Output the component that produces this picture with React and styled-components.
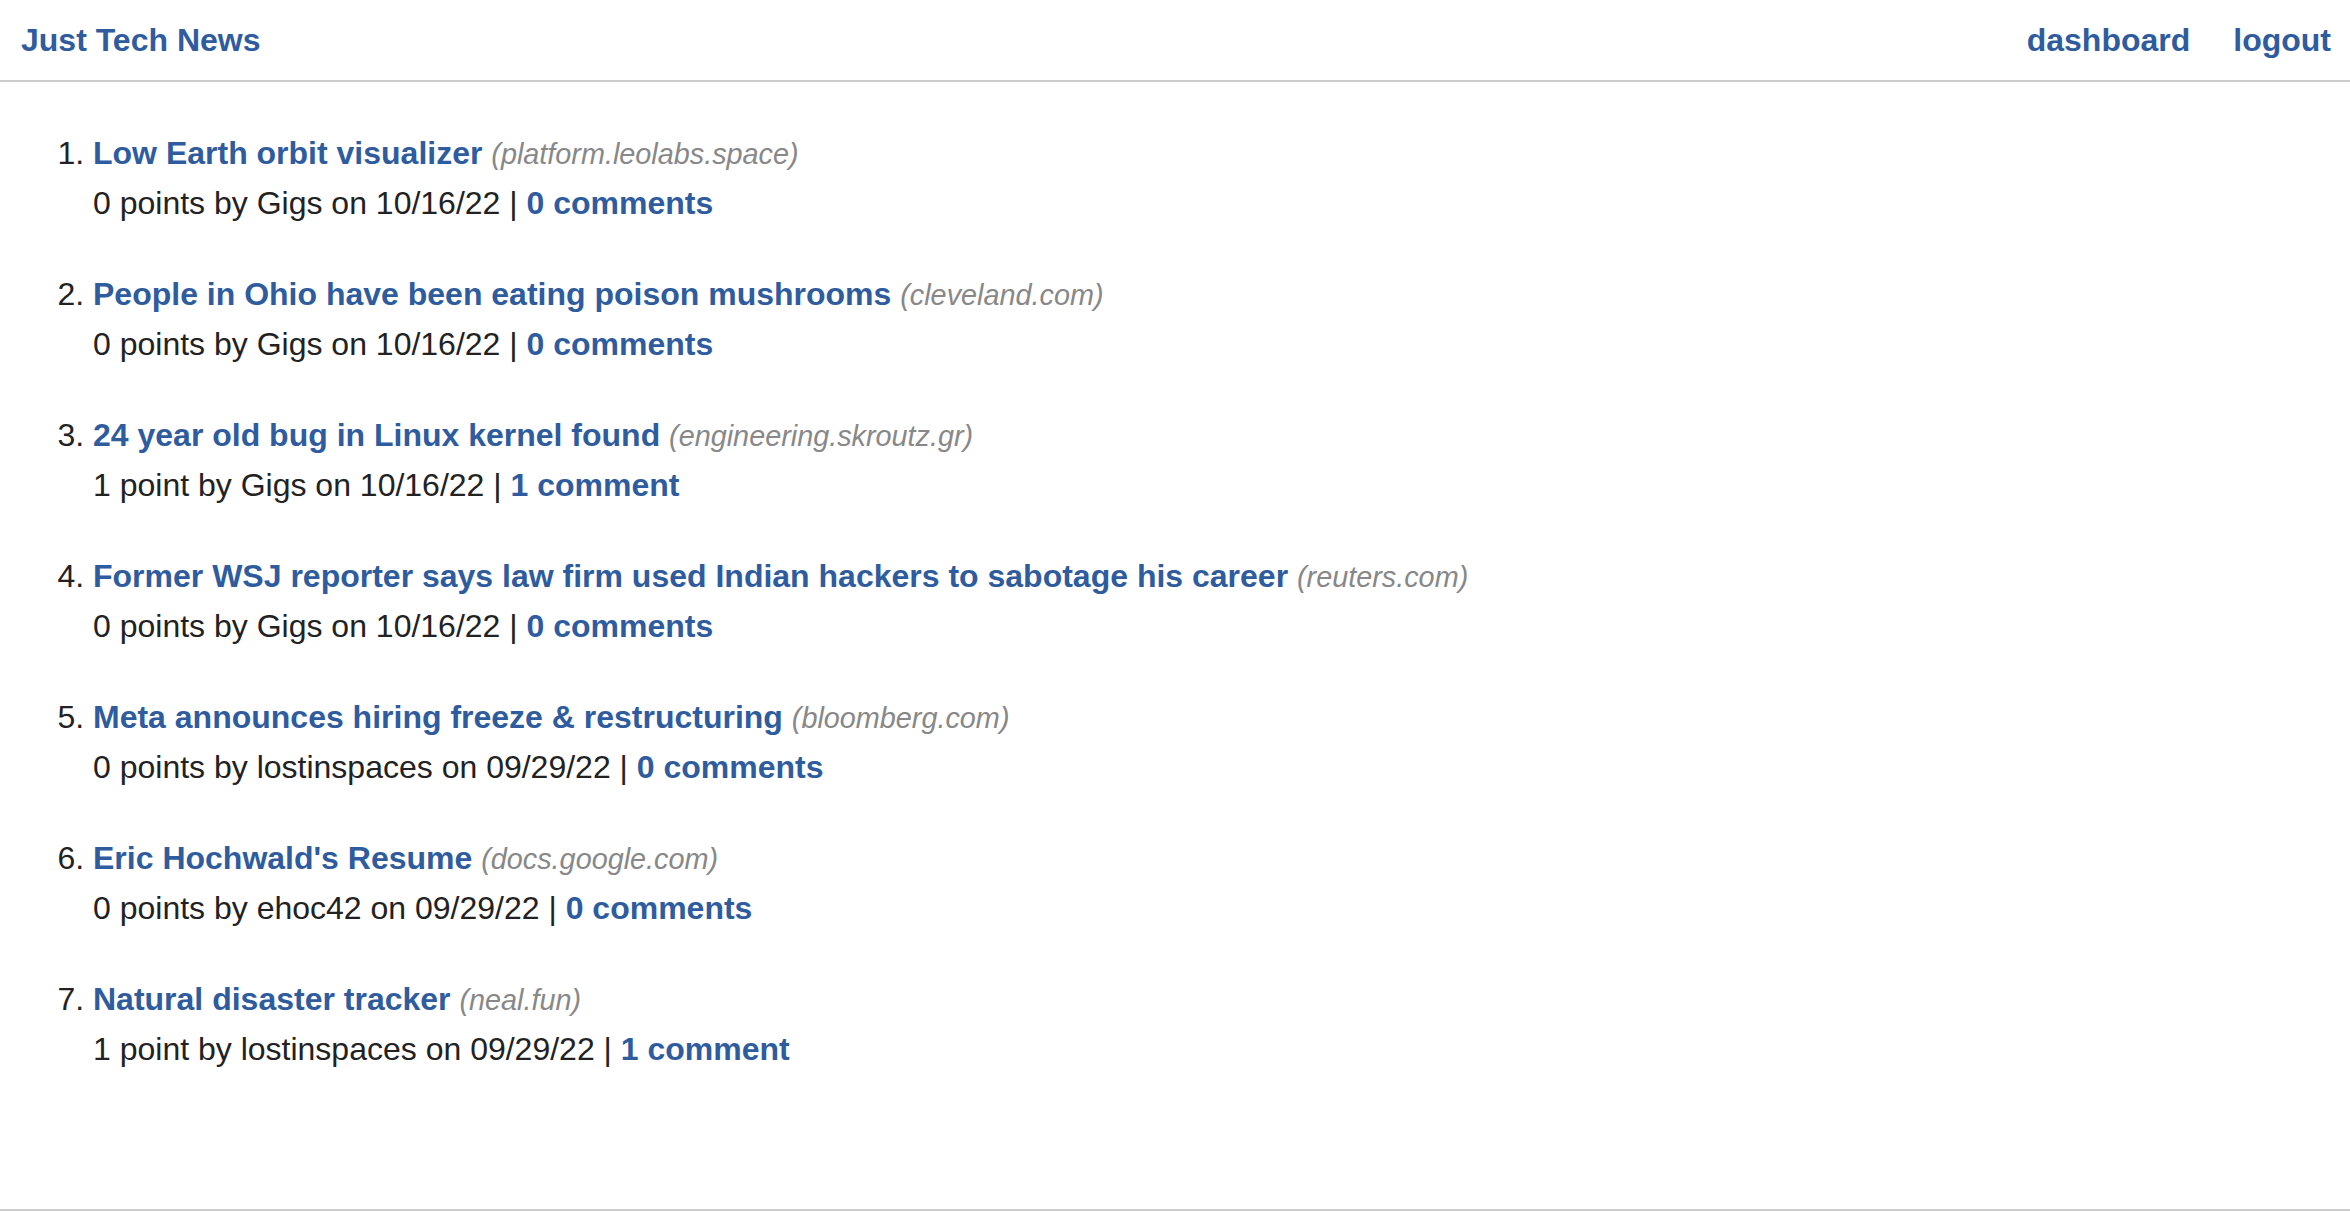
import React from "react";
import styled, { createGlobalStyle } from "styled-components";

const GlobalStyle = createGlobalStyle`
  body {
    margin: 0;
    background: #fff;
    font-family: "Liberation Sans", Arial, Helvetica, sans-serif;
    color: #222;
  }
  a {
    text-decoration: none;
  }
`;

const posts = [
  { title: "Low Earth orbit visualizer", domain: "platform.leolabs.space", points: 0, user: "Gigs", date: "10/16/22", comments: 0 },
  { title: "People in Ohio have been eating poison mushrooms", domain: "cleveland.com", points: 0, user: "Gigs", date: "10/16/22", comments: 0 },
  { title: "24 year old bug in Linux kernel found", domain: "engineering.skroutz.gr", points: 1, user: "Gigs", date: "10/16/22", comments: 1 },
  { title: "Former WSJ reporter says law firm used Indian hackers to sabotage his career", domain: "reuters.com", points: 0, user: "Gigs", date: "10/16/22", comments: 0 },
  { title: "Meta announces hiring freeze & restructuring", domain: "bloomberg.com", points: 0, user: "lostinspaces", date: "09/29/22", comments: 0 },
  { title: "Eric Hochwald's Resume", domain: "docs.google.com", points: 0, user: "ehoc42", date: "09/29/22", comments: 0 },
  { title: "Natural disaster tracker", domain: "neal.fun", points: 1, user: "lostinspaces", date: "09/29/22", comments: 1 },
];

const plural = (n, word) => `${n} ${word}${n === 1 ? "" : "s"}`;

const App = () => {
  return (
    <>
      <GlobalStyle />
      <Header>
        <Brand href="#">Just Tech News</Brand>
        <Nav>
          <NavLink href="#">dashboard</NavLink>
          <NavLink href="#">logout</NavLink>
        </Nav>
      </Header>
      <Main>
        <PostList>
          {posts.map((post) => (
            <Post key={post.title}>
              <TitleLine>
                <PostTitle href="#">{post.title}</PostTitle>{" "}
                <Domain>({post.domain})</Domain>
              </TitleLine>
              <Meta>
                {plural(post.points, "point")} by {post.user} on {post.date} |{" "}
                <CommentLink href="#">{plural(post.comments, "comment")}</CommentLink>
              </Meta>
            </Post>
          ))}
        </PostList>
      </Main>
      <Footer />
    </>
  );
};

const Header = styled.header`
  display: flex;
  justify-content: space-between;
  align-items: center;
  height: 80px;
  padding: 0 19px 0 21px;
  border-bottom: 2px solid #cccccc;
`;

const Brand = styled.a`
  color: #2f5c9e;
  font-size: 32px;
  font-weight: bold;
`;

const Nav = styled.nav`
  display: flex;
  gap: 43px;
`;

const NavLink = styled.a`
  color: #2f5c9e;
  font-size: 32px;
  font-weight: bold;
`;

const Main = styled.main`
  min-height: 1127px;
  box-sizing: border-box;
  padding-top: 47px;
`;

const PostList = styled.ol`
  margin: 0;
  padding-left: 93px;
  font-size: 32px;
`;

const Post = styled.li`
  margin-bottom: 43px;
  &::marker {
    color: #222;
  }
`;

const TitleLine = styled.div`
  line-height: 48px;
`;

const PostTitle = styled.a`
  color: #2f5c9e;
  font-weight: bold;
`;

const Domain = styled.span`
  color: #888;
  font-style: italic;
  font-size: 28.8px;
`;

const Meta = styled.div`
  margin-top: 1px;
  line-height: 48px;
  color: #222;
`;

const CommentLink = styled.a`
  color: #2f5c9e;
  font-weight: bold;
`;

const Footer = styled.footer`
  border-top: 2px solid #cccccc;
  height: 40px;
`;

export default App;
